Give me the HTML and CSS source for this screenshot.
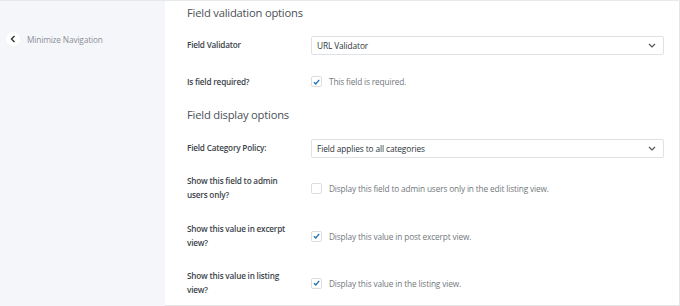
FILE: index.html
```html
<!DOCTYPE html>
<html>
<head>
<meta charset="utf-8">
<link rel="stylesheet" href="styles.css">
</head>
<body>
<div class="page">
  <aside class="sidebar">
    <div class="minimize">
      <span class="circle">
        <svg width="6" height="8" viewBox="0 0 6 8"><path d="M4.5 1 L1.5 4 L4.5 7" fill="none" stroke="#333" stroke-width="1.4"/></svg>
      </span>
      <span class="min-text">Minimize Navigation</span>
    </div>
  </aside>
  <main class="main">
    <h2 class="heading h1">Field validation options</h2>
    <div class="row r1">
      <div class="label">Field Validator</div>
      <div class="select"><span>URL Validator</span>
        <svg class="chev" width="8" height="5" viewBox="0 0 8 5"><path d="M1 1 L4 4 L7 1" fill="none" stroke="#555" stroke-width="1.2"/></svg>
      </div>
    </div>
    <div class="row r2">
      <div class="label">Is field required?</div>
      <div class="check"><span class="box"><svg width="10" height="10" viewBox="0 0 10 10"><path d="M2.2 5.2 L4.2 7.2 L8 2.6" fill="none" stroke="#2271b1" stroke-width="1.5"/></svg></span><span class="ctext">This field is required.</span></div>
    </div>
    <h2 class="heading h2">Field display options</h2>
    <div class="row r3">
      <div class="label">Field Category Policy:</div>
      <div class="select"><span>Field applies to all categories</span>
        <svg class="chev" width="8" height="5" viewBox="0 0 8 5"><path d="M1 1 L4 4 L7 1" fill="none" stroke="#555" stroke-width="1.2"/></svg>
      </div>
    </div>
    <div class="row r4">
      <div class="label">Show this field to admin users only?</div>
      <div class="check"><span class="box"></span><span class="ctext">Display this field to admin users only in the edit listing view.</span></div>
    </div>
    <div class="row r5">
      <div class="label">Show this value in excerpt view?</div>
      <div class="check"><span class="box"><svg width="10" height="10" viewBox="0 0 10 10"><path d="M2.2 5.2 L4.2 7.2 L8 2.6" fill="none" stroke="#2271b1" stroke-width="1.5"/></svg></span><span class="ctext">Display this value in post excerpt view.</span></div>
    </div>
    <div class="row r6">
      <div class="label">Show this value in listing view?</div>
      <div class="check"><span class="box"><svg width="10" height="10" viewBox="0 0 10 10"><path d="M2.2 5.2 L4.2 7.2 L8 2.6" fill="none" stroke="#2271b1" stroke-width="1.5"/></svg></span><span class="ctext">Display this value in the listing view.</span></div>
    </div>
  </main>
</div>
</body>
</html>
```

FILE: styles.css
```css
* { box-sizing: border-box; }
html, body { margin: 0; padding: 0; background: #fff; }
body {
  font-family: "Open Sans", "Noto Sans", sans-serif;
  color: #3c434a;
  width: 680px;
  height: 306px;
  overflow: hidden;
}
.page {
  display: flex;
  height: 306px;
  border-top: 1px solid #e8e9ec;
}
.sidebar {
  width: 165px;
  flex: none;
  background: #f5f6fa;
  padding-top: 31px;
}
.minimize {
  display: flex;
  align-items: center;
  padding-left: 6px;
  height: 14px;
}
.circle {
  width: 14px;
  height: 14px;
  border-radius: 50%;
  background: #fff;
  display: flex;
  align-items: center;
  justify-content: center;
}
.min-text {
  margin-left: 7px;
  font-size: 8.3px;
  letter-spacing: -0.15px;
  color: #8c8f96;
}
.main {
  width: 515px;
  flex: none;
  border-right: 1px solid #e5e5e5;
  border-bottom: 1px solid #e5e5e5;
  padding-left: 22px;
  padding-right: 15px;
  height: 305px;
}
.heading {
  margin: 0;
  font-size: 11.2px;
  font-weight: 500;
  letter-spacing: -0.2px;
  color: #4a5057;
  display: flex;
  align-items: center;
}
.h1 { height: 23px; }
.h2 { height: 34px; }
.row {
  display: grid;
  grid-template-columns: 124px 1fr;
  align-items: center;
}
.r1 { height: 42px; }
.r2 { height: 31px; }
.r3 { height: 34px; }
.r4 { height: 46px; }
.r5 { height: 50px; }
.r6 { height: 44px; }
.label {
  font-size: 8.2px;
  font-weight: 600;
  letter-spacing: -0.2px;
  color: #3c434a;
  line-height: 14px;
  padding-right: 12px;
}
.select {
  height: 19px;
  border: 1px solid #dfe1e6;
  border-radius: 2px;
  display: flex;
  align-items: center;
  justify-content: space-between;
  padding: 0 7px 0 5px;
  font-size: 8.3px;
  letter-spacing: -0.1px;
  color: #2c3338;
}
.check {
  display: flex;
  align-items: center;
}
.box {
  width: 11px;
  height: 11px;
  border: 1px solid #dcdde0;
  border-radius: 2px;
  display: flex;
  align-items: center;
  justify-content: center;
  background: #fff;
}
.box svg { display: block; }
.ctext {
  margin-left: 7px;
  font-size: 8.3px;
  letter-spacing: -0.15px;
  color: #72777c;
}
```
